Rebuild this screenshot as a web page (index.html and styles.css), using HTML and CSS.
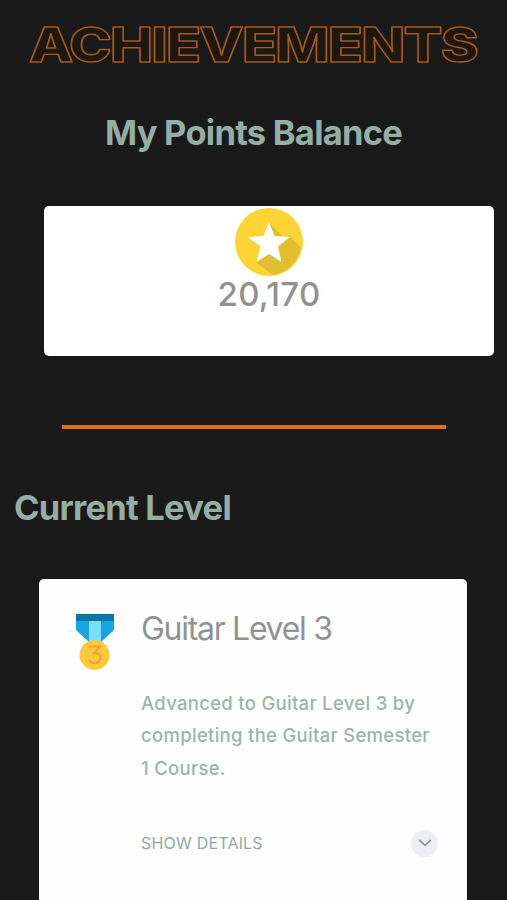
FILE: index.html
```
<!DOCTYPE html>
<html>
    <head>
        <meta charset="utf-8">
        <title>Achievements</title>
        <link rel="stylesheet" href="styles.css">
    </head>
    <body>

    <h1>
        <svg class="logo" width="507" height="74">
            <text x="29" y="62" textLength="448" lengthAdjust="spacingAndGlyphs">ACHIEVEMENTS</text>
        </svg>
    </h1>

    <h2 class="balance-title">My Points Balance</h2>
    <div class="balance">
        <svg class="coin" width="68" height="68" viewBox="0 0 68 68">
            <circle cx="34" cy="34" r="34" fill="#fcd535" />
            <path d="M34 14L49 30L54 28L66 39A34 34 0 0 1 38 67L22 55Z" fill="#e0bf30" />
            <path d="M34 14L39.5 28L55 29L43 38.5L46.5 54L34 46L21.500 54L25.5 38.5L13 29L28.500 28Z" fill="#fff" />
        </svg>
        <div class="points">20,170</div>
    </div>

    <hr>

    <h2 class="level-title">Current Level</h2>
    <div class="card">
        <svg class="medal" width="38" height="56" viewBox="0 0 38 56">
            <path d="M0 0H38V16L25 28H13L0 16Z" fill="#16a5df" />
            <path d="M13 7H25V29H13Z" fill="#7bdcfb" />
            <path d="M0 0H38V7H0Z" fill="#0a78a3" />
            <circle cx="18.500" cy="41" r="15" fill="#fdc93c" />
            <path d="M13 32.500H24L18.500 39C27 39 26 49 19 49C16 49 14 48 13 46" fill="none" stroke="#f2a22f" stroke-width="2.200" />
        </svg>
        <div class="info">
            <h3>Guitar Level 3</h3>
            <p>Advanced to Guitar Level 3 by<br>completing the Guitar Semester<br>1 Course.</p>
            <div class="details">
                <span>SHOW DETAILS</span>
                <button>
                    <svg width="14" height="8" viewBox="0 0 14 8">
                        <path d="M1.200 1L7 6.300L12.800 1" fill="none" stroke="#92969b" stroke-width="1.800" />
                    </svg>
                </button>
            </div>
        </div>
    </div>

    </body>
</html>
```

FILE: styles.css
```
body, html {
    height: 100%;
    margin: 0;
    padding: 0;
    font-family: Inter, "Liberation Sans", sans-serif;
}
body {
    background: #191919;
    overflow: hidden;
}
h1, h2, h3, p {
    margin: 0;
}
h1 {
    height: 74px;
}
h2 {
    height: 44px;
    line-height: 45px;
    font-size: 34.5px;
    font-weight: 700;
    color: #94aea5;
    white-space: nowrap;
}
.logo {
    display: block;
}
.logo text {
    font-size: 48px;
    font-weight: 800;
    letter-spacing: -1.5px;
    fill: #1e1610;
    stroke: #a65a18;
    stroke-width: 1.4px;
    stroke-linejoin: round;
}
.balance-title {
    margin-top: 36px;
    text-align: center;
    letter-spacing: -0.75px;
}
.balance {
    box-sizing: border-box;
    width: 450px;
    height: 150px;
    margin: 52px 0 0 44px;
    padding-top: 2px;
    background: #fff;
    border-radius: 5px;
    text-align: center;
}
.coin {
    display: block;
    margin: 0 auto;
}
.points {
    height: 40px;
    line-height: 36px;
    font-size: 33px;
    font-weight: 500;
    letter-spacing: 0.3px;
    color: #919191;
}
hr {
    width: 384px;
    height: 4px;
    margin: 69px 0 0 62px;
    border: none;
    background: #df6d1c;
}
.level-title {
    margin: 56px 0 0 14px;
    letter-spacing: -0.75px;
}
.card {
    display: flex;
    box-sizing: border-box;
    width: 428px;
    height: 360px;
    margin: 50px 0 0 39px;
    padding: 35px 29px 0 37px;
    background: #fefefe;
    border-radius: 5px 5px 0 0;
}
.medal {
    flex: none;
}
.info {
    flex: 1;
    margin-left: 27px;
    white-space: nowrap;
}
h3 {
    height: 32px;
    line-height: 30px;
    font-size: 32px;
    font-weight: 400;
    letter-spacing: -1.3px;
    color: #919294;
}
p {
    margin-top: 41px;
    line-height: 32.300px;
    font-size: 18.500px;
    font-weight: 500;
    letter-spacing: 0.3px;
    color: #9eb3ab;
}
.details {
    display: flex;
    align-items: center;
    justify-content: space-between;
    margin-top: 46px;
    font-size: 16px;
    letter-spacing: 0.2px;
    color: #94a8a0;
}
button {
    display: flex;
    align-items: center;
    justify-content: center;
    width: 27px;
    height: 27px;
    padding: 0;
    border: none;
    border-radius: 50%;
    background: #eeeff2;
    cursor: pointer;
}
```
